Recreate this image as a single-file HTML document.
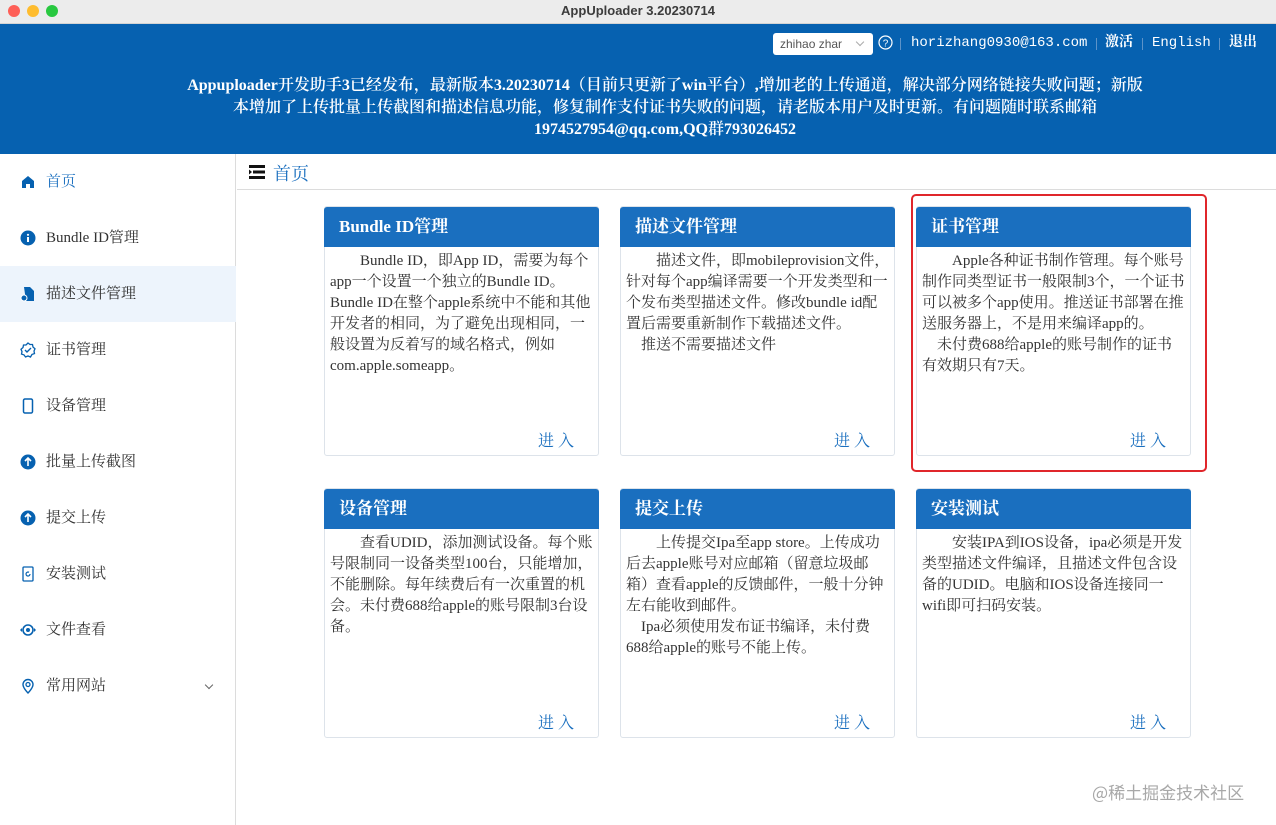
<!DOCTYPE html>
<html><head><meta charset="utf-8"><style>
*{margin:0;padding:0;box-sizing:border-box}
body{width:1276px;height:825px;overflow:hidden;background:#fff;font-family:"Liberation Serif","Noto Serif CJK SC",serif;position:relative;color:#333}
.tb{position:absolute;left:0;top:0;width:1276px;height:24px;background:#ececec;border-bottom:1px solid #d4d4d4;text-align:center;font:bold 13px/22px "Liberation Sans","Noto Sans CJK SC",sans-serif;color:#3c3c3c}
.dot{position:absolute;top:5px;width:12px;height:12px;border-radius:50%}
.hd{position:absolute;left:0;top:24px;width:1276px;height:130px;background:#0661b0}
.notice{position:absolute;left:130px;top:75px;width:1070px;text-align:center;color:#fff;font-size:16px;line-height:22px;font-weight:600}
.sel{position:absolute;left:773px;top:33px;width:100px;height:22px;background:#fff;border-radius:3px;color:#555;font:12px/22px "Liberation Sans",sans-serif;padding-left:7px}
.sel:after{content:"";position:absolute;right:10px;top:6px;width:5px;height:5px;border-right:1px solid #aaa;border-bottom:1px solid #aaa;transform:rotate(45deg)}
.tl{position:absolute;top:34px;color:#fff;font-size:13px;line-height:18px}
.mono{font-family:"Liberation Mono",monospace;font-size:14px}
.sep{position:absolute;top:38px;width:1px;height:12px;background:#5d93c8}
.side{position:absolute;left:0;top:154px;width:236px;height:671px;border-right:1px solid #dcdcdc}
.it{position:absolute;left:0;width:236px;height:56px;font-size:15px;line-height:56px;padding-left:46px;color:#333}
.it svg{position:absolute;left:20px;top:20px}
.it.sel2{background:#edf4fc}
.main-t{position:absolute;left:237px;top:154px;width:1039px;height:36px;border-bottom:1px solid #dcdcdc}
.card{position:absolute;width:275px;height:250px;border:1px solid #dde3ea;border-radius:3px;background:#fff}
.ch{height:40px;background:#1a6fbf;color:#fff;font-weight:bold;font-size:17px;line-height:40px;padding-left:15px;margin:0 -1px;border-radius:3px 3px 0 0}
.cb{padding:4px 6px 0 5px;font-size:15px;line-height:21px;color:#333;white-space:nowrap}
.go{position:absolute;right:20px;bottom:4px;color:#1a6fbf;font-size:16px;letter-spacing:4px}
.red{position:absolute;left:911px;top:194px;width:296px;height:278px;border:2px solid #e0262b;border-radius:5px}
</style></head><body>
<div class="tb">AppUploader 3.20230714
<div class="dot" style="left:8px;background:#fe5f57"></div><div class="dot" style="left:27px;background:#febc2e"></div><div class="dot" style="left:46px;background:#28c840"></div></div>
<div class="hd"></div>
<div class="sel">zhihao zhar</div>
<div class="tl" style="left:878px;top:35px"><svg width="15" height="15"><circle cx="7.5" cy="7.5" r="6.5" fill="none" stroke="#fff" stroke-width="1.2"/><text x="7.5" y="11.5" text-anchor="middle" fill="#fff" font-size="10" font-family="Liberation Sans">?</text></svg></div>
<div class="sep" style="left:900px"></div>
<div class="tl mono" style="left:911px">horizhang0930@163.com</div>
<div class="sep" style="left:1096px"></div>
<div class="tl" style="left:1105px;font-weight:bold;font-size:14px">激活</div>
<div class="sep" style="left:1142px"></div>
<div class="tl mono" style="left:1152px">English</div>
<div class="sep" style="left:1219px"></div>
<div class="tl" style="left:1229px;font-weight:bold;font-size:14px">退出</div>
<div class="notice">Appuploader开发助手3已经发布，最新版本3.20230714（目前只更新了win平台）,增加老的上传通道，解决部分网络链接失败问题；新版<br>本增加了上传批量上传截图和描述信息功能，修复制作支付证书失败的问题，请老版本用户及时更新。有问题随时联系邮箱<br>1974527954@qq.com,QQ群793026452</div>

<div class="side">
<div class="it" style="top:0;color:#1a6fbf"><svg width="16" height="16"><path d="M2 7L8 2l6 5v7h-4v-4H6v4H2z" fill="#0661b0"/></svg>首页</div>
<div class="it" style="top:56px"><svg width="16" height="16"><circle cx="8" cy="8" r="7.5" fill="#0661b0"/><rect x="7" y="7" width="2" height="5" fill="#fff"/><circle cx="8" cy="4.8" r="1.1" fill="#fff"/></svg>Bundle ID管理</div>
<div class="it sel2" style="top:112px"><svg width="16" height="16"><path d="M4 1h6l4 4v10H6z" fill="#0661b0"/><circle cx="4" cy="12" r="3" fill="#0661b0" stroke="#fff"/></svg>描述文件管理</div>
<div class="it" style="top:168px"><svg width="16" height="16"><path d="M8 1l2 1.5 2.5 0 .5 2.5 2 1.8-1 2.3.5 2.5-2.5.8L10.5 15 8 14l-2.5 1-1.5-2.1-2.5-.8.5-2.5-1-2.3 2-1.8.5-2.5h2.5z" fill="none" stroke="#0661b0" stroke-width="1.3"/><path d="M5 8l2 2 4-4" fill="none" stroke="#0661b0" stroke-width="1.4"/></svg>证书管理</div>
<div class="it" style="top:224px"><svg width="16" height="16"><rect x="3.5" y="1" width="9" height="14" rx="1.5" fill="none" stroke="#0661b0" stroke-width="1.5"/></svg>设备管理</div>
<div class="it" style="top:280px"><svg width="16" height="16"><circle cx="8" cy="8" r="7.5" fill="#0661b0"/><path d="M8 12V4M5 7l3-3 3 3" stroke="#fff" stroke-width="1.6" fill="none"/></svg>批量上传截图</div>
<div class="it" style="top:336px"><svg width="16" height="16"><circle cx="8" cy="8" r="7.5" fill="#0661b0"/><path d="M8 12V4M5 7l3-3 3 3" stroke="#fff" stroke-width="1.6" fill="none"/></svg>提交上传</div>
<div class="it" style="top:392px"><svg width="16" height="16"><rect x="3" y="1" width="10" height="14" rx="1" fill="none" stroke="#0661b0" stroke-width="1.3"/><path d="M10 8a2 2 0 1 1-1-1.7" fill="none" stroke="#0661b0" stroke-width="1.2"/></svg>安装测试</div>
<div class="it" style="top:448px"><svg width="18" height="16" style="left:19px"><circle cx="9" cy="8" r="5" fill="none" stroke="#0661b0" stroke-width="1.6"/><circle cx="9" cy="8" r="2" fill="#0661b0"/><path d="M1 8l2-2v4zM17 8l-2-2v4z" fill="#0661b0"/></svg>文件查看</div>
<div class="it" style="top:504px"><svg width="16" height="16"><path d="M8 15s-5-5-5-8.5a5 5 0 0 1 10 0C13 10 8 15 8 15z" fill="none" stroke="#0661b0" stroke-width="1.4"/><circle cx="8" cy="6.5" r="2" fill="none" stroke="#0661b0" stroke-width="1.3"/></svg>常用网站<span style="position:absolute;left:206px;top:24px;width:6px;height:6px;border-right:1px solid #666;border-bottom:1px solid #666;transform:rotate(45deg)"></span></div>
</div>

<div class="main-t"><svg width="16" height="14" style="position:absolute;left:12px;top:11px"><rect x="0" y="0" width="16" height="3" fill="#111"/><rect x="4" y="5.5" width="12" height="3" fill="#111"/><rect x="0" y="11" width="16" height="3" fill="#111"/><path d="M0 4.5l3 2.5-3 2.5z" fill="#111"/></svg><span style="position:absolute;left:36px;top:6px;font-size:18px;color:#1a6fbf">首页</span></div>

<div class="card" style="left:324px;top:206px"><div class="ch">Bundle ID管理</div><div class="cb">　　Bundle ID，即App ID，需要为每个<br>app一个设置一个独立的Bundle ID。<br>Bundle ID在整个apple系统中不能和其他<br>开发者的相同，为了避免出现相同，一<br>般设置为反着写的域名格式，例如<br>com.apple.someapp。</div><div class="go">进入</div></div>
<div class="card" style="left:620px;top:206px"><div class="ch">描述文件管理</div><div class="cb">　　描述文件，即mobileprovision文件，<br>针对每个app编译需要一个开发类型和一<br>个发布类型描述文件。修改bundle id配<br>置后需要重新制作下载描述文件。<br>　推送不需要描述文件</div><div class="go">进入</div></div>
<div class="card" style="left:916px;top:206px"><div class="ch">证书管理</div><div class="cb">　　Apple各种证书制作管理。每个账号<br>制作同类型证书一般限制3个，一个证书<br>可以被多个app使用。推送证书部署在推<br>送服务器上，不是用来编译app的。<br>　未付费688给apple的账号制作的证书<br>有效期只有7天。</div><div class="go">进入</div></div>
<div class="card" style="left:324px;top:488px"><div class="ch">设备管理</div><div class="cb">　　查看UDID，添加测试设备。每个账<br>号限制同一设备类型100台，只能增加，<br>不能删除。每年续费后有一次重置的机<br>会。未付费688给apple的账号限制3台设<br>备。</div><div class="go">进入</div></div>
<div class="card" style="left:620px;top:488px"><div class="ch">提交上传</div><div class="cb">　　上传提交Ipa至app store。上传成功<br>后去apple账号对应邮箱（留意垃圾邮<br>箱）查看apple的反馈邮件，一般十分钟<br>左右能收到邮件。<br>　Ipa必须使用发布证书编译，未付费<br>688给apple的账号不能上传。</div><div class="go">进入</div></div>
<div class="card" style="left:916px;top:488px"><div class="ch">安装测试</div><div class="cb">　　安装IPA到IOS设备，ipa必须是开发<br>类型描述文件编译，且描述文件包含设<br>备的UDID。电脑和IOS设备连接同一<br>wifi即可扫码安装。</div><div class="go">进入</div></div>
<div class="red"></div>
<div style="position:absolute;left:1092px;top:779px;font:17px 'Noto Sans CJK SC',sans-serif;color:#a8a8a8">@稀土掘金技术社区</div>
</body></html>
